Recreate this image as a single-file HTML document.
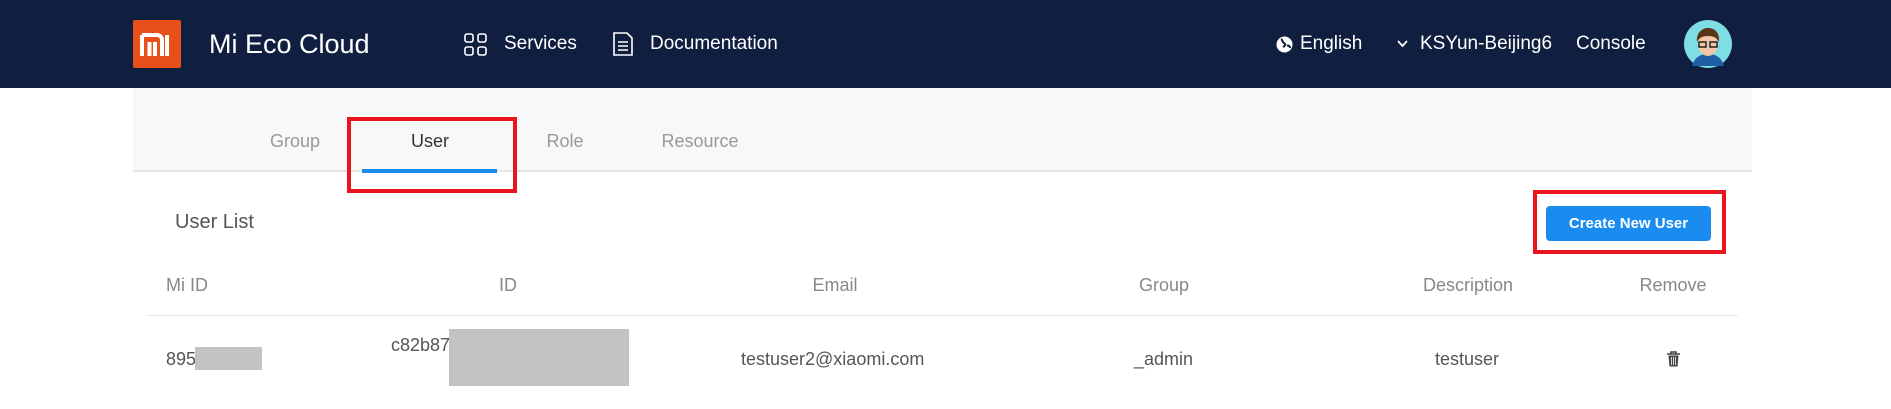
<!DOCTYPE html>
<html><head><meta charset="utf-8"><style>
*{margin:0;padding:0;box-sizing:border-box}
body{width:1891px;height:409px;background:#fff;font-family:"Liberation Sans",sans-serif;position:relative;overflow:hidden}
.a{position:absolute;white-space:nowrap}
.hdr{position:absolute;left:0;top:0;width:1891px;height:88px;background:#101e3f}
.w{color:#fff;font-size:19px}
.g{color:#888;font-size:18px;transform:translateX(-50%)}
.d{color:#555;font-size:18px}
</style></head><body>
<div class="hdr"></div>
<div class="a" style="left:133px;top:20px;width:48px;height:48px;background:#e8501a;border-radius:2px"></div>
<svg class="a" style="left:140px;top:32px" width="34" height="26" viewBox="0 0 34 26"><path d="M2 3h15a5 5 0 0 1 5 5v16M2 3v21M9.5 10v14M15 10v14M27 3v21" stroke="#fff" stroke-width="4" fill="none"/></svg>
<div class="a w" style="left:209px;top:29px;font-size:27px">Mi Eco Cloud</div>
<svg class="a" style="left:464px;top:33px" width="23" height="23" viewBox="0 0 23 23" fill="none" stroke="#fff" stroke-width="1.6"><rect x="1" y="1" width="8" height="8" rx="2"/><rect x="14" y="1" width="8" height="8" rx="2"/><rect x="1" y="14" width="8" height="8" rx="2"/><rect x="14" y="14" width="8" height="8" rx="2"/></svg>
<div class="a w" style="left:504px;top:33px">Services</div>
<svg class="a" style="left:612px;top:31px" width="22" height="26" viewBox="0 0 22 26" fill="none" stroke="#fff" stroke-width="1.6"><path d="M2 2h13l5 5v17H2z"/><path d="M6 11h10M6 15h10M6 19h10"/></svg>
<div class="a w" style="left:650px;top:33px">Documentation</div>
<svg class="a" style="left:1276px;top:36px" width="17" height="17" viewBox="0 0 17 17"><circle cx="8.5" cy="8.5" r="8" fill="#fff"/><path d="M5 3c2 1 1 3 3 4s1 3 -1 4M11 10c1-1 3 0 3 2" stroke="#101e3f" stroke-width="2" fill="none"/></svg>
<div class="a w" style="left:1300px;top:33px">English</div>
<svg class="a" style="left:1397px;top:40px" width="11" height="8" viewBox="0 0 11 8"><path d="M1 1l4.5 5L10 1" stroke="#fff" stroke-width="1.8" fill="none"/></svg>
<div class="a w" style="left:1420px;top:33px">KSYun-Beijing6</div>
<div class="a w" style="left:1576px;top:33px">Console</div>
<svg class="a" style="left:1684px;top:20px" width="48" height="48" viewBox="0 0 48 48"><circle cx="24" cy="24" r="24" fill="#7fdde4"/><path d="M8 46c3-10 10-12 16-12s13 2 16 12z" fill="#1f5fa8"/><ellipse cx="24" cy="24" rx="10" ry="12" fill="#f2c7a5"/><path d="M13 22c-1-10 6-14 11-14s12 3 11 14c-2-4-5-6-11-6s-9 2-11 6z" fill="#5a3517"/><rect x="15" y="22" width="7" height="5" fill="none" stroke="#222" stroke-width="1.5"/><rect x="26" y="22" width="7" height="5" fill="none" stroke="#222" stroke-width="1.5"/></svg>

<div class="a" style="left:133px;top:88px;width:1619px;height:84px;background:#f8f8f8;border-bottom:2px solid #e6e6e6"></div>
<div class="a g" style="left:295px;top:131px;color:#999">Group</div>
<div class="a g" style="left:430px;top:131px;color:#333">User</div>
<div class="a g" style="left:565px;top:131px;color:#999">Role</div>
<div class="a g" style="left:700px;top:131px;color:#999">Resource</div>
<div class="a" style="left:362px;top:169px;width:135px;height:4px;background:#1a8cf0"></div>
<div class="a" style="left:347px;top:117px;width:170px;height:76px;border:4px solid #e8141e"></div>

<div class="a" style="left:175px;top:211px;font-size:20px;color:#555">User List</div>
<div class="a" style="left:1546px;top:206px;width:165px;height:35px;background:#1a8cf0;border-radius:4px;color:#fff;font-size:15px;font-weight:bold;text-align:center;line-height:35px">Create New User</div>
<div class="a" style="left:1533px;top:190px;width:193px;height:64px;border:4px solid #e8141e"></div>

<div class="a" style="left:166px;top:275px;color:#888;font-size:18px">Mi ID</div>
<div class="a g" style="left:508px;top:275px">ID</div>
<div class="a g" style="left:835px;top:275px">Email</div>
<div class="a g" style="left:1164px;top:275px">Group</div>
<div class="a g" style="left:1468px;top:275px">Description</div>
<div class="a g" style="left:1673px;top:275px">Remove</div>
<div class="a" style="left:146px;top:315px;width:1592px;height:1px;background:#e6e6e6"></div>

<div class="a d" style="left:166px;top:349px">895</div>
<div class="a" style="left:195px;top:347px;width:67px;height:23px;background:#c3c3c3"></div>
<div class="a d" style="left:391px;top:335px">c82b87</div>
<div class="a" style="left:449px;top:329px;width:180px;height:57px;background:#c3c3c3"></div>
<div class="a d" style="left:741px;top:349px">testuser2@xiaomi.com</div>
<div class="a d" style="left:1134px;top:349px">_admin</div>
<div class="a d" style="left:1435px;top:349px">testuser</div>
<svg class="a" style="left:1667px;top:351px" width="13" height="16" viewBox="0 0 13 16"><path d="M0 3h13M4 3V1h5v2" stroke="#444" stroke-width="1.6" fill="none"/><path d="M1.5 4.5h10l-1 11h-8z" fill="#444"/><path d="M4.5 6v8M6.5 6v8M8.5 6v8" stroke="#fff" stroke-width=".8"/></svg>
</body></html>
